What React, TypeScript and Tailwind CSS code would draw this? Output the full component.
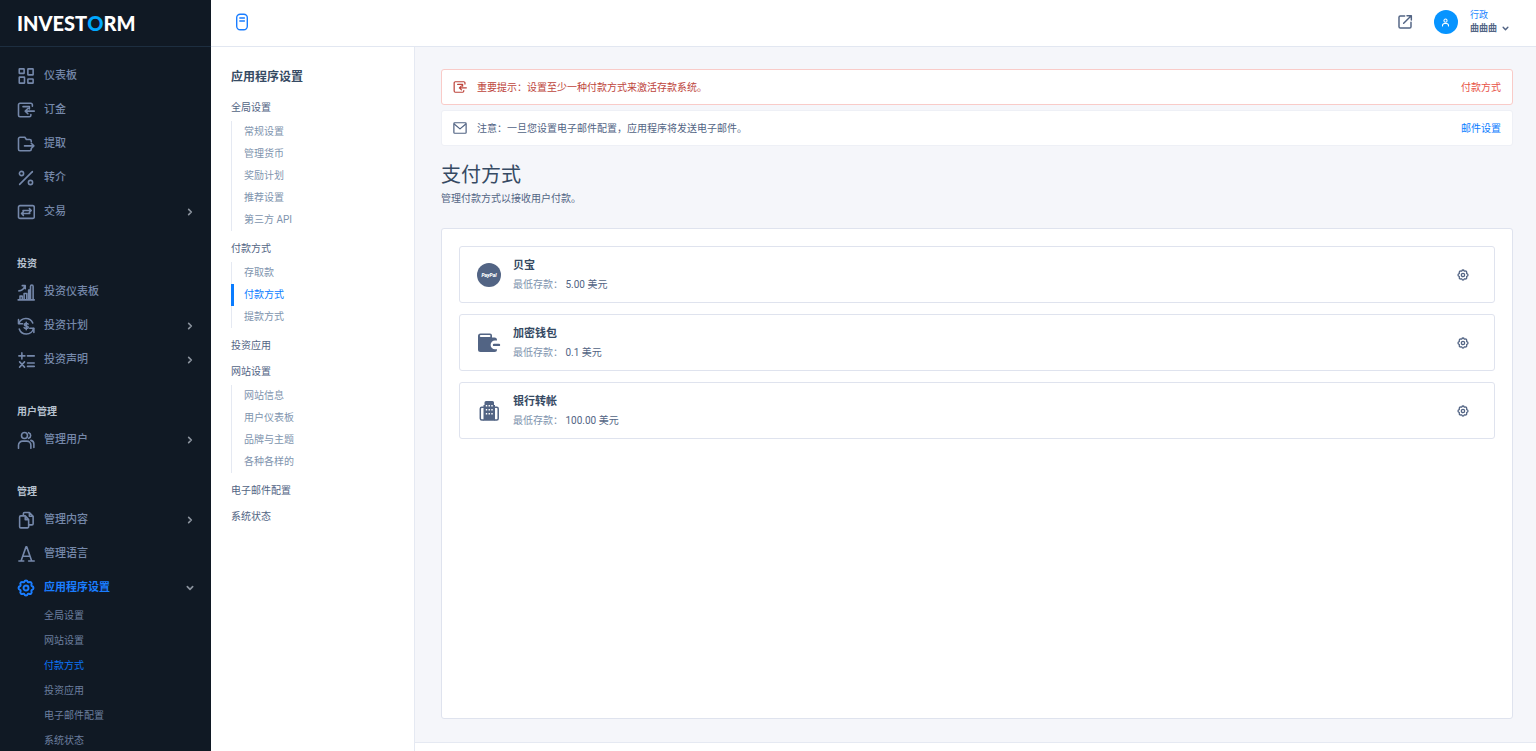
import { ReactNode } from "react";

interface MenuItem {
  label: string;
  icon: IconName;
  arrow?: "right" | "down";
  active?: boolean;
}

interface MenuGroup {
  heading?: string;
  items: MenuItem[];
}

type IconName = keyof typeof ICONS;

const ICONS = {
  dashboard: (
    <>
      <rect x="3" y="2.5" width="6.5" height="6" rx="0.6" />
      <rect x="14.5" y="2.5" width="7" height="8" rx="0.6" />
      <rect x="3" y="13.5" width="7" height="8" rx="0.6" />
      <rect x="14.5" y="16" width="7" height="5.500" rx="0.6" />
    </>
  ),
  deposit: (
    <>
      <path d="M20.5 7V5a2 2 0 0 0-2-2H4a2 2 0 0 0-2 2v14a2 2 0 0 0 2 2h12.500a2 2 0 0 0 2-2v-1" />
      <path d="M8 7.500h8.500v3M11 13.500h12M14.500 10l-3.500 3.500 3.500 3.500" />
    </>
  ),
  withdraw: (
    <>
      <path d="M19 9V8a2 2 0 0 0-2-2h-4.500L10.500 3H4a2 2 0 0 0-2 2v14a2 2 0 0 0 2 2h13a2 2 0 0 0 2-2" />
      <path d="M10 14.500h12.500M19 11l3.500 3.500L19 18" />
    </>
  ),
  percent: (
    <>
      <circle cx="6" cy="6" r="2.800" />
      <circle cx="18" cy="18" r="2.800" />
      <path d="M20.500 3.500l-17 17" />
    </>
  ),
  transaction: (
    <>
      <rect x="2" y="3.500" width="21" height="17" rx="2" />
      <path d="M8 10h11M16.500 7.500L19 10l-2.500 2.500M17 14H6M8.500 11.500L6 14l2.500 2.500" />
    </>
  ),
  chart: (
    <>
      <path d="M1.500 22.500h21.500M4 22v-4.500h3V22M9.500 22v-8h3.500v8M15.500 22V9.500h2V22M18 22V4.500a1.500 1.500 0 0 1 3.500 0V22" />
      <path d="M2.500 10.500c4 0 6.500-2.500 8-6.500M7 3.500h4v4" />
    </>
  ),
  invest: (
    <>
      <path d="M2 3.500V9h5.500M22.500 20.500V15H17" />
      <path d="M2.500 8.500A10 10 0 0 1 21 8M3 16a10 10 0 0 0 19-.5" />
      <path d="M14.800 9.500c-.8-1.300-5-1.300-5 .7 0 2.200 5.200 1.200 5.200 3.500 0 2.100-4.400 2.100-5.500.5M12.300 7v10" />
    </>
  ),
  statement: (
    <path d="M6.500 2.500v8M2.500 6.500h8M14 6.500h9M3.500 14.500l6.500 7M10 14.500l-6.500 7M14 16h9M14 20.500h9" />
  ),
  users: (
    <>
      <circle cx="10" cy="6" r="4" />
      <path d="M2 23v-4a5.500 5.500 0 0 1 5.500-5.500H13a5.500 5.500 0 0 1 5.500 5.500v4M15.500 2.200a4 4 0 0 1 0 7.600M18.500 12.500A5 5 0 0 1 22.500 17.500V22" />
    </>
  ),
  content: (
    <>
      <path d="M11 6.500H5a1.500 1.500 0 0 0-1.500 1.500v13A1.500 1.500 0 0 0 5 22.500h9a1.500 1.500 0 0 0 1.500-1.500V11.500zM11 6.500v5h4.500" />
      <path d="M8.500 6V3.500A1.500 1.500 0 0 1 10 2h6.500l5 5v10a1.500 1.500 0 0 1-1.500 1.500h-4M16.500 2v5h5" />
    </>
  ),
  language: (
    <path d="M5.500 21L12 2.500h1L19.500 21M7.700 15h9.500M2.500 21.300h6.500M15.500 21.300H23" />
  ),
  gear: (
    <>
      <path d="M12 2c1.300 0 2 .6 2.400 2l1.200.5c1.300-.8 2.400-.7 3.300.2s1 2 .2 3.300l.6 1.300c1.400.4 2.300 1.300 2.300 2.700s-.9 2.300-2.300 2.700l-.6 1.300c.8 1.300.7 2.400-.2 3.300s-2 1-3.300.2l-1.200.5c-.4 1.400-1.100 2-2.400 2s-2-.6-2.400-2l-1.200-.5c-1.300.8-2.400.7-3.300-.2s-1-2-.2-3.300l-.6-1.300C2.900 14.300 2 13.400 2 12s.9-2.300 2.300-2.700L4.900 8c-.8-1.300-.7-2.400.2-3.300s2-1 3.300-.2L9.600 4c.4-1.400 1.100-2 2.400-2z" />
      <circle cx="12" cy="12" r="3.300" />
    </>
  ),
  mail: (
    <>
      <rect x="1.500" y="3" width="21" height="18" rx="1.500" />
      <path d="M2.500 5.500L12 13.500l9.500-8" />
    </>
  ),
  external: (
    <path d="M11.500 3H5a2 2 0 0 0-2 2v14a2 2 0 0 0 2 2h14a2 2 0 0 0 2-2v-6.500M15 2.500h6.500V9M21 3l-11 11" />
  ),
  user: (
    <>
      <circle cx="12" cy="7" r="4.200" />
      <path d="M4 21.500v-1.500a5.500 5.500 0 0 1 5.500-5.500h5A5.500 5.500 0 0 1 20 20v1.500" />
    </>
  ),
  right: <path d="M8 4l8 8-8 8" />,
  down: <path d="M4 8l8 8 8-8" />,
};

const MENU: MenuGroup[] = [
  {
    items: [
      { label: "仪表板", icon: "dashboard" },
      { label: "订金", icon: "deposit" },
      { label: "提取", icon: "withdraw" },
      { label: "转介", icon: "percent" },
      { label: "交易", icon: "transaction", arrow: "right" },
    ],
  },
  {
    heading: "投资",
    items: [
      { label: "投资仪表板", icon: "chart" },
      { label: "投资计划", icon: "invest", arrow: "right" },
      { label: "投资声明", icon: "statement", arrow: "right" },
    ],
  },
  {
    heading: "用户管理",
    items: [{ label: "管理用户", icon: "users", arrow: "right" }],
  },
  {
    heading: "管理",
    items: [
      { label: "管理内容", icon: "content", arrow: "right" },
      { label: "管理语言", icon: "language" },
      { label: "应用程序设置", icon: "gear", arrow: "down", active: true },
    ],
  },
];

const SUB_MENU = ["全局设置", "网站设置", "付款方式", "投资应用", "电子邮件配置", "系统状态"];

const SETTINGS: { title: string; links?: string[] }[] = [
  {
    title: "全局设置",
    links: ["常规设置", "管理货币", "奖励计划", "推荐设置", "第三方 API"],
  },
  { title: "付款方式", links: ["存取款", "付款方式", "提款方式"] },
  { title: "投资应用" },
  {
    title: "网站设置",
    links: ["网站信息", "用户仪表板", "品牌与主题", "各种各样的"],
  },
  { title: "电子邮件配置" },
  { title: "系统状态" },
];

const CURRENT = "付款方式";

function Icon({
  name,
  className,
  stroke = 2.1,
}: {
  name: IconName;
  className: string;
  stroke?: number;
}) {
  return (
    <svg
      viewBox="0 0 24 24"
      className={`shrink-0 ${className}`}
      fill="none"
      stroke="currentColor"
      strokeWidth={stroke}
      strokeLinecap="round"
      strokeLinejoin="round"
      aria-hidden="true"
    >
      {ICONS[name]}
    </svg>
  );
}

function Sidebar() {
  return (
    <aside className="flex w-[211px] shrink-0 flex-col overflow-hidden bg-[#101924]">
      <a
        href="#"
        className="flex h-[47px] shrink-0 items-center border-b border-[#1d2e40] pl-[17px] font-['Lato','Roboto',sans-serif] text-xl font-black text-white"
      >
        INVEST<span className="text-[#00a8ff]">O</span>RM
      </a>
      <nav className="flex flex-col gap-[26px] pt-[14px]">
        {MENU.map((group, i) => (
          <div key={i}>
            {group.heading && (
              <h6 className="mb-[3px] h-[21px] pl-[17px] text-[10px] leading-[21px] font-bold text-[#b7c2d0]">
                {group.heading}
              </h6>
            )}
            <ul className="flex flex-col gap-1">
              {group.items.map((item) => (
                <li key={item.label}>
                  <a
                    href="#"
                    className={`flex h-[30px] items-center gap-[9px] pr-[17px] pl-[17px] text-[11px] ${
                      item.active ? "font-bold text-[#1a7dff]" : "font-medium text-[#7588aa]"
                    }`}
                  >
                    <Icon
                      name={item.icon}
                      className="size-[18px]"
                      stroke={item.active ? 2.6 : 2.1}
                    />
                    <span className="flex-1">{item.label}</span>
                    {item.arrow && (
                      <Icon
                        name={item.arrow}
                        className="size-2 text-[#8a929d]"
                        stroke={5}
                      />
                    )}
                  </a>
                </li>
              ))}
            </ul>
          </div>
        ))}
      </nav>
      <ul>
        {SUB_MENU.map((label) => (
          <li key={label}>
            <a
              href="#"
              className={`block h-[25px] pl-11 text-[10px] leading-[25px] ${
                label === CURRENT ? "text-[#0d74f5]" : "text-[#6c7f9f]"
              }`}
            >
              {label}
            </a>
          </li>
        ))}
      </ul>
    </aside>
  );
}

function Header() {
  return (
    <header className="flex h-[47px] shrink-0 items-center border-b border-[#e2e7f1] bg-white pr-[27px] pb-[2px] pl-6">
      <button type="button" aria-label="切换菜单" className="text-[#1a7dff]">
        <svg viewBox="0 0 14 18" className="h-[18px] w-[14px]" fill="none" stroke="currentColor" strokeWidth="1.4">
          <rect x="1.700" y="1.200" width="10.600" height="15.600" rx="3.500" />
          <path d="M4.800 5h4.600M4.800 8h4.600" strokeLinecap="round" />
        </svg>
      </button>
      <a href="#" aria-label="打开网站" className="ml-auto text-[#526484]">
        <Icon name="external" className="size-4" stroke={2.2} />
      </a>
      <button type="button" className="ml-[21px] flex items-center text-left">
        <span className="flex size-6 items-center justify-center rounded-full bg-[#0794ff] text-white">
          <Icon name="user" className="size-[9px]" stroke={2.8} />
        </span>
        <span className="ml-3 flex flex-col text-[9px] leading-[13px]">
          <span className="text-[#1a86ff]">行政</span>
          <span className="flex items-center gap-[5px] font-bold text-[#526484]">
            曲曲曲
            <Icon name="down" className="size-[7px]" stroke={5} />
          </span>
        </span>
      </button>
    </header>
  );
}

function SettingsNav() {
  return (
    <nav className="w-[204px] shrink-0 border-r border-[#e5e9f2] bg-white pt-5 pl-5 text-[10px]">
      <h5 className="mb-2 h-5 text-xs leading-5 font-bold text-[#364a63]">应用程序设置</h5>
      {SETTINGS.map((section) => (
        <div key={section.title}>
          <a href="#" className="block h-[26px] leading-[26px] text-[#526484]">
            {section.title}
          </a>
          {section.links && (
            <ul className="mb-[5px] border-l border-[#e5e9f2]">
              {section.links.map((link) => (
                <li key={link}>
                  <a
                    href="#"
                    className={`-ml-px block h-[22px] border-l-3 pl-[10px] leading-[22px] ${
                      link === CURRENT
                        ? "border-[#0a7cff] text-[#0a7cff]"
                        : "border-transparent text-[#8094ae]"
                    }`}
                  >
                    {link}
                  </a>
                </li>
              ))}
            </ul>
          )}
        </div>
      ))}
    </nav>
  );
}

interface NoticeProps {
  icon: IconName;
  text: string;
  action: string;
  danger?: boolean;
}

function Notice({ icon, text, action, danger }: NoticeProps) {
  return (
    <div
      className={`flex h-9 items-center rounded-[3px] border bg-white px-[11px] text-[10px] ${
        danger ? "border-[#f9cbc8] text-[#bd453c]" : "border-[#eef0f6] text-[#526484]"
      }`}
    >
      <Icon name={icon} className="size-[14px]" />
      <p className="ml-[10px] flex-1">{text}</p>
      <a href="#" className={danger ? "text-[#e85347]" : "text-[#0a7cff]"}>
        {action}
      </a>
    </div>
  );
}

interface MethodProps {
  name: string;
  amount: string;
  children: ReactNode;
}

function Method({ name, amount, children }: MethodProps) {
  return (
    <li className="flex h-[57px] items-center rounded-[3px] border border-[#dfe3ee] pr-[25px] pl-[17px]">
      <div className="flex size-6 items-center justify-center text-[#526484]">{children}</div>
      <div className="ml-3 flex-1">
        <h6 className="text-[11px] leading-[19px] font-bold text-[#364a63]">{name}</h6>
        <p className="text-[10px] leading-[19px] text-[#8094ae]">
          最低存款： <span className="text-[#526484]">{amount}</span>
        </p>
      </div>
      <button type="button" aria-label={`${name} 设置`} className="text-[#526484]">
        <Icon name="gear" className="size-3" stroke={2.6} />
      </button>
    </li>
  );
}

export default function App() {
  return (
    <div className="flex h-screen overflow-hidden bg-[#f5f6fa] font-['Roboto','Noto_Sans_CJK_SC',sans-serif]">
      <Sidebar />
      <div className="flex min-w-0 flex-1 flex-col">
        <Header />
        <div className="flex min-h-0 flex-1">
          <SettingsNav />
          <div className="flex min-w-0 flex-1 flex-col">
            <main className="flex flex-1 flex-col pt-[22px] pr-[23px] pb-[23px] pl-[26px]">
              <div className="flex flex-col gap-[5px]">
                <Notice
                  danger
                  icon="deposit"
                  text="重要提示：设置至少一种付款方式来激活存款系统。"
                  action="付款方式"
                />
                <Notice
                  icon="mail"
                  text="注意：一旦您设置电子邮件配置，应用程序将发送电子邮件。"
                  action="邮件设置"
                />
              </div>
              <h2 className="mt-[13px] text-xl leading-8 text-[#364a63]">支付方式</h2>
              <p className="text-[10px] leading-4 text-[#526484]">管理付款方式以接收用户付款。</p>
              <section className="mt-[21px] flex-1 rounded-[3px] border border-[#dfe3ee] bg-white p-[17px]">
                <ul className="flex flex-col gap-[11px]">
                  <Method name="贝宝" amount="5.00 美元">
                    <span className="flex size-6 items-center justify-center rounded-full bg-[#526484]">
                      <svg viewBox="0 0 24 24" className="size-6" aria-label="PayPal">
                        <text
                          x="12"
                          y="13.500"
                          textAnchor="middle"
                          fill="#fff"
                          fontSize="5"
                          fontWeight="900"
                          fontStyle="italic"
                          fontFamily="Roboto, sans-serif"
                        >
                          PayPal
                        </text>
                      </svg>
                    </span>
                  </Method>
                  <Method name="加密钱包" amount="0.1 美元">
                    <svg viewBox="0 0 24 24" className="size-6" fill="none">
                      <path
                        d="M3.500 2.500h9.500a2 2 0 0 1 2 2V6.500h2.500a2.500 2.500 0 0 1 2.500 2.500v.5h-2a4.400 4.400 0 0 0 0 8.800h2v.2a2.500 2.500 0 0 1-2.500 2.500h-14A2.500 2.500 0 0 1 1 18.500V5a2.500 2.500 0 0 1 2.500-2.500z"
                        fill="currentColor"
                      />
                      <path d="M3.800 5h8.700" stroke="#fff" strokeWidth="2" strokeLinecap="round" />
                      <path d="M17 13.900h5" stroke="currentColor" strokeWidth="2.400" strokeLinecap="round" />
                    </svg>
                  </Method>
                  <Method name="银行转帐" amount="100.00 美元">
                    <svg viewBox="0 0 24 24" className="size-6" fill="none">
                      <path
                        d="M7 8.300H4.800A1.500 1.500 0 0 0 3.300 9.800v9.700A1.500 1.500 0 0 0 4.800 21H7M17.500 8.300h2.200a1.500 1.500 0 0 1 1.500 1.500v9.700a1.500 1.500 0 0 1-1.500 1.500h-2.200"
                        stroke="currentColor"
                        strokeWidth="1.500"
                      />
                      <path
                        d="M6.500 21.800V6H7.500V3.500A1.500 1.500 0 0 1 9 2h6.500A1.500 1.500 0 0 1 17 3.500V6h1v15.800z"
                        fill="currentColor"
                      />
                      <path
                        d="M9.500 6v9.500M12.250 6v9.500M15 6v9.500"
                        stroke="#fff"
                        strokeWidth="1.400"
                        strokeDasharray="1.500 2.500"
                      />
                    </svg>
                  </Method>
                </ul>
              </section>
            </main>
            <footer className="h-[9px] shrink-0 border-t border-[#e5e9f2] bg-white" />
          </div>
        </div>
      </div>
    </div>
  );
}
